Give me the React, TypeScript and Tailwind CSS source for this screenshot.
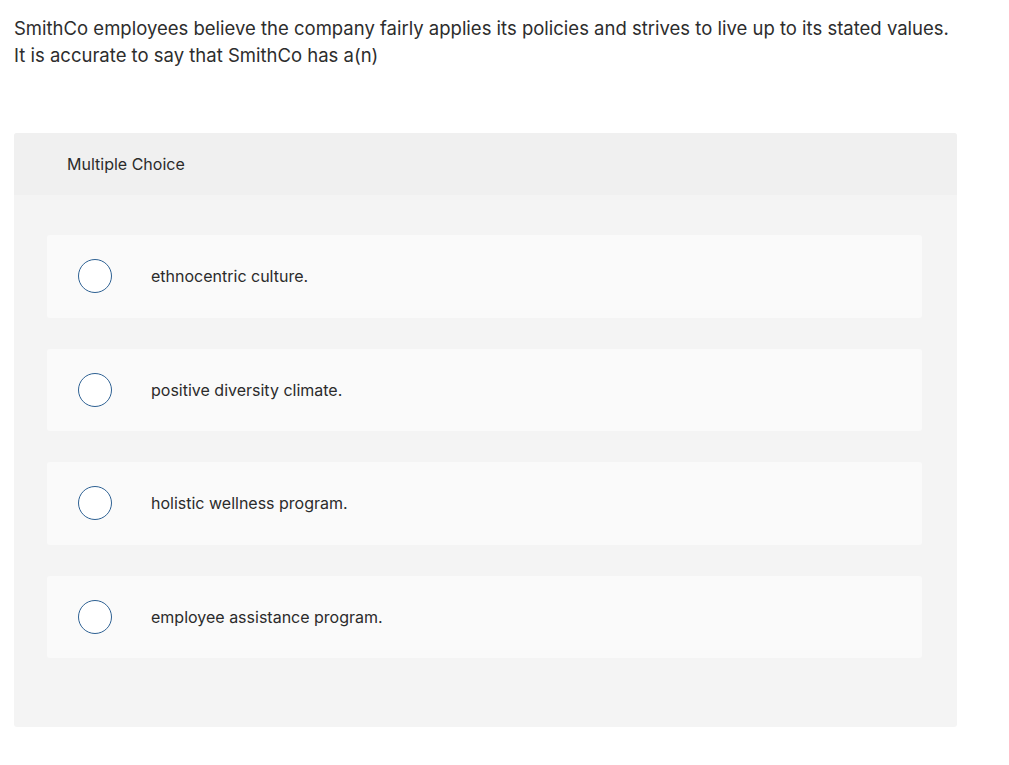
import React from "react";

const options = [
  "ethnocentric culture.",
  "positive diversity climate.",
  "holistic wellness program.",
  "employee assistance program.",
];

export default function App() {
  return (
    <div
      className="min-h-screen bg-white text-[#2b2b2b]"
      style={{ fontFamily: "Inter, 'Open Sans', Arial, sans-serif" }}
    >
      <div className="pl-[14px] pr-[40px] pt-[15px]">
        <p className="text-[18.5px] leading-[27px] text-[#2d2d2d]">
          SmithCo employees believe the company fairly applies its policies and strives to live up to its stated values.
          <br />
          It is accurate to say that SmithCo has a(n)
        </p>
        <div className="mt-[64px] w-[943px] rounded-[3px] bg-[#f4f4f4] overflow-hidden">
          <div className="h-[62px] bg-[#f0f0f0] flex items-center pl-[53px] text-[16px] text-[#2b2b2b]">
            Multiple Choice
          </div>
          <div className="pt-[40px] pb-[69px] pl-[33px] pr-[35px] flex flex-col gap-[31px]">
            {options.map((o) => (
              <div
                key={o}
                className="h-[82.5px] rounded-[3px] bg-[#fafafa] flex items-center pl-[31px]"
              >
                <span className="w-[34px] h-[34px] rounded-full border-[1.5px] border-[#2e6193] bg-white shrink-0" />
                <span className="ml-[39px] text-[16px] text-[#2b2b2b]">{o}</span>
              </div>
            ))}
          </div>
        </div>
      </div>
    </div>
  );
}
